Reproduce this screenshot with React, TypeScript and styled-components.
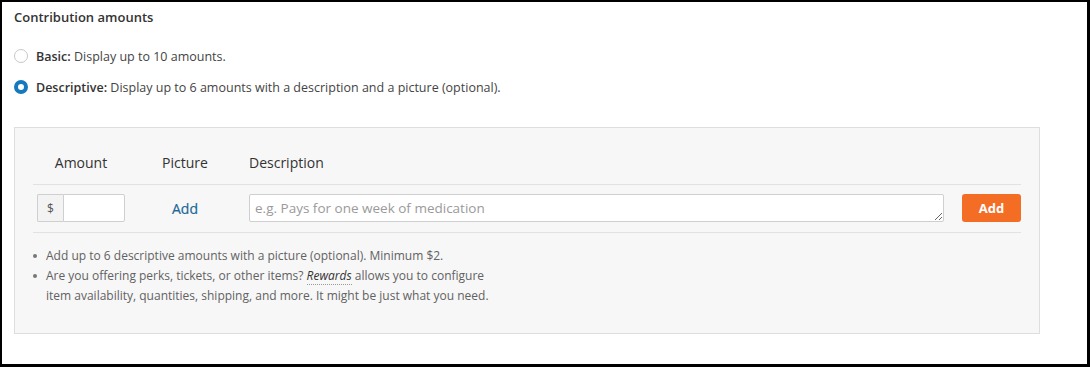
import * as React from 'react';
import styled, { createGlobalStyle } from 'styled-components';

const GlobalStyle = createGlobalStyle`
  html, body {
    margin: 0;
    padding: 0;
    background: #fff;
  }
  body {
    font-family: 'Open Sans', 'Liberation Sans', sans-serif;
  }
`;

const App = () => {
  return (
    <>
      <GlobalStyle />
      <Frame>
        <Title>Contribution amounts</Title>

        <Radio.Group>
          <Radio.Row $first>
            <Radio.Dot />
            <Radio.Label>
              <b>Basic:</b> Display up to 10 amounts.
            </Radio.Label>
          </Radio.Row>
          <Radio.Row>
            <Radio.Dot $checked />
            <Radio.Label>
              <b>Descriptive:</b> Display up to 6 amounts with a description and a picture (optional).
            </Radio.Label>
          </Radio.Row>
        </Radio.Group>

        <Panel.Container>
          <Table.Header>
            <Table.HeadCell $center>Amount</Table.HeadCell>
            <Table.HeadCell $center>Picture</Table.HeadCell>
            <Table.HeadCell>Description</Table.HeadCell>
            <Table.HeadCell />
          </Table.Header>
          <Table.Row>
            <Table.Cell>
              <Amount.Group>
                <Amount.Addon>$</Amount.Addon>
                <Amount.Input type="text" />
              </Amount.Group>
            </Table.Cell>
            <Table.Cell $center>
              <PictureLink href="#">Add</PictureLink>
            </Table.Cell>
            <Table.Cell>
              <Description placeholder="e.g. Pays for one week of medication" rows={1} />
            </Table.Cell>
            <Table.Cell $right>
              <AddButton type="button">Add</AddButton>
            </Table.Cell>
          </Table.Row>

          <Notes.List>
            <Notes.Item>
              <Notes.Bullet />
              <span>Add up to 6 descriptive amounts with a picture (optional). Minimum $2.</span>
            </Notes.Item>
            <Notes.Item>
              <Notes.Bullet />
              <span>
                Are you offering perks, tickets, or other items? <Notes.Term>Rewards</Notes.Term> allows you to configure
                <br />
                item availability, quantities, shipping, and more. It might be just what you need.
              </span>
            </Notes.Item>
          </Notes.List>
        </Panel.Container>
      </Frame>
    </>
  );
};

export default App;

const Frame = styled.div`
  box-sizing: border-box;
  width: 1090px;
  height: 367px;
  border: solid #000;
  border-width: 2px 3px 3px 2px;
  padding: 6px 0 0 12px;
  color: #333;
`;

const Title = styled.h2`
  margin: 0;
  font-size: 13px;
  line-height: 18px;
  font-weight: 600;
  color: #333;
`;

const Radio = {
  Group: styled.div`
    display: flex;
    flex-direction: column;
    margin-top: 20px;
  `,

  Row: styled.label<{ $first?: boolean }>`
    display: flex;
    align-items: center;
    height: 20px;
    margin-top: ${(p) => (p.$first ? '0' : '11px')};
  `,

  Dot: styled.span<{ $checked?: boolean }>`
    box-sizing: border-box;
    width: 14px;
    height: 14px;
    border-radius: 50%;
    background: #fff;
    border: ${(p) => (p.$checked ? '4px solid #1479bd' : '1px solid #c8c8c8')};
    margin-right: 8px;
    flex-shrink: 0;
  `,

  Label: styled.span`
    font-size: 12.5px;
    color: #444;

    & b {
      font-weight: 600;
      color: #333;
    }
  `,
};

const Panel = {
  Container: styled.div`
    box-sizing: border-box;
    width: 1026px;
    height: 207px;
    margin-top: 30px;
    padding: 17px 18px 0 18px;
    background: #f7f7f7;
    border: 1px solid #dedede;
  `,
};

const columns = '96px 112px 1fr 69px';

const Table = {
  Header: styled.div`
    display: grid;
    grid-template-columns: ${columns};
    padding: 8px 0 11px;
    border-bottom: 1px solid #e2e2e2;
  `,

  HeadCell: styled.div<{ $center?: boolean }>`
    font-size: 14px;
    line-height: 20px;
    color: #333;
    text-align: ${(p) => (p.$center ? 'center' : 'left')};
    padding: 0 8px;
  `,

  Row: styled.div`
    display: grid;
    grid-template-columns: ${columns};
    align-items: center;
    padding: 9px 0 10px;
    border-bottom: 1px solid #e2e2e2;
  `,

  Cell: styled.div<{ $center?: boolean; $right?: boolean }>`
    display: flex;
    justify-content: ${(p) => (p.$center ? 'center' : p.$right ? 'flex-end' : 'flex-start')};
    padding: 0 ${(p) => (p.$right || p.$center ? '0' : '8px')} 0 ${(p) => (p.$right || p.$center ? '0' : '4px')};
  `,
};

const Amount = {
  Group: styled.div`
    display: flex;
    width: 88px;
    height: 28px;
  `,

  Addon: styled.span`
    box-sizing: border-box;
    width: 26px;
    display: flex;
    align-items: center;
    justify-content: center;
    background: #f3f3f3;
    border: 1px solid #cfcfcf;
    border-right: none;
    border-radius: 2px 0 0 2px;
    font-size: 12px;
    color: #555;
  `,

  Input: styled.input`
    box-sizing: border-box;
    flex: 1;
    min-width: 0;
    height: 28px;
    border: 1px solid #cfcfcf;
    border-radius: 0 2px 2px 0;
    background: #fff;
    outline: none;
  `,
};

const PictureLink = styled.a`
  font-size: 14px;
  font-weight: 500;
  color: #1b6796;
  text-decoration: none;
  -webkit-text-stroke: 0.2px #1b6796;
`;

const Description = styled.textarea`
  box-sizing: border-box;
  width: 100%;
  height: 28px;
  margin: 0 0 0 4px;
  padding: 5px 5px;
  border: 1px solid #cfcfcf;
  border-radius: 2px;
  background: #fff;
  font-family: 'Open Sans', 'Liberation Sans', sans-serif;
  font-size: 13.5px;
  line-height: 16px;
  color: #333;
  resize: both;
  outline: none;

  &::placeholder {
    color: #9a9a9a;
  }
`;

const AddButton = styled.button`
  width: 59px;
  height: 28px;
  border: none;
  border-radius: 3px;
  background: #f46d25;
  color: #fff;
  font-family: 'Open Sans', 'Liberation Sans', sans-serif;
  font-size: 13px;
  font-weight: 700;
  cursor: pointer;
`;

const Notes = {
  List: styled.ul`
    list-style: none;
    margin: 13px 0 0;
    padding: 0;
  `,

  Item: styled.li`
    display: flex;
    align-items: flex-start;
    font-size: 12px;
    line-height: 20px;
    color: #626262;
  `,

  Bullet: styled.span`
    width: 4px;
    height: 4px;
    border-radius: 50%;
    background: #777;
    margin: 8px 9px 0 0;
    flex-shrink: 0;
  `,

  Term: styled.span`
    font-style: italic;
    color: #333;
    border-bottom: 1px dotted #999;
  `,
};
